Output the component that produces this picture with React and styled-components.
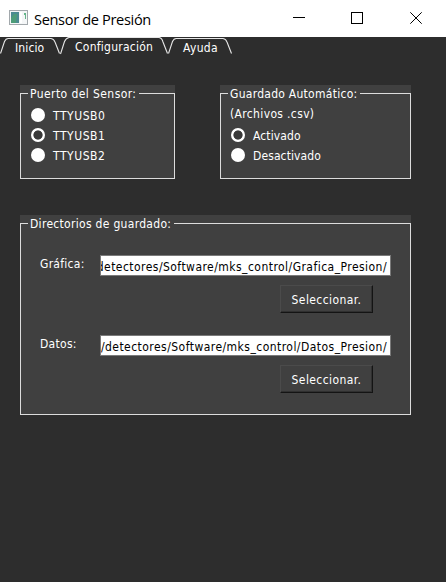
import React from 'react';
import styled, { createGlobalStyle } from 'styled-components';

const Global = createGlobalStyle`
  * { box-sizing: border-box; }
  body { margin: 0; background: #2d2d2d; overflow: hidden; }
`;

const Window = styled.div`
  width: 446px;
  height: 582px;
  display: flex;
  flex-direction: column;
  background: #2d2d2d;
  color: #fff;
  font: 12px/16px 'DejaVu Sans Condensed', 'DejaVu Sans', sans-serif;
  font-stretch: condensed;
  white-space: nowrap;
`;

const TitleBar = styled.header`
  height: 37px;
  flex: none;
  display: flex;
  align-items: flex-start;
  padding: 10px 24px 0 9px;
  background: #fff;
  color: #000;
  svg { display: block; flex: none; }
`;

const Title = styled.h1`
  flex: 1;
  margin: -1px 0 0 6px;
  font: 400 14.6px/20px 'Open Sans', 'Noto Sans', sans-serif;
  letter-spacing: ${(p) => p.$spacing}px;
`;

const WindowControls = styled.div`
  display: grid;
  grid-template-columns: 58px 59px 12px;
  padding-top: 2px;
`;

const Tabs = styled.nav`
  height: 18px;
  display: flex;
`;

const TabItem = styled.div`
  position: relative;
  width: ${(p) => p.$width}px;
  height: 18px;
  padding: ${(p) => (p.$active ? 2 : 3)}px 0 0 ${(p) => p.$inset}px;
  letter-spacing: ${(p) => p.$spacing || 0}px;
  svg { position: absolute; left: 0; top: 0; }
`;

const Page = styled.main`
  flex: 1;
  padding: 30px 35px 0 20px;
`;

const TopRow = styled.div`
  display: flex;
  gap: 45px;
  margin-bottom: 36px;
`;

const Group = styled.section`
  position: relative;
  width: ${(p) => p.$width}px;
  height: ${(p) => p.$height}px;
  padding-top: 8px;
  background: #404040;
`;

const Frame = styled.div`
  height: 100%;
  border: 1px solid #dcdcdc;
  padding: ${(p) => p.$pad};
`;

const Legend = styled.h2`
  position: absolute;
  left: 8px;
  top: 1px;
  width: ${(p) => p.$width}px;
  margin: 0;
  padding-left: 2px;
  font: inherit;
  background: #404040;
  letter-spacing: ${(p) => p.$spacing || 0}px;
`;

const Text = styled.span`
  padding-top: 1px;
  letter-spacing: ${(p) => p.$spacing || 0}px;
`;

const Option = styled.label`
  height: 20px;
  display: flex;
  align-items: flex-start;
  padding-top: 2px;
  gap: 8px;
`;

const Radio = styled.span`
  width: 14px;
  height: 14px;
  margin-top: 1px;
  border-radius: 50%;
  background: ${(p) => (p.$checked ? 'radial-gradient(circle, #383838 4.2px, #fff 5px)' : '#fff')};
`;

const Note = styled.div`
  height: 20px;
  margin-left: -1px;
  line-height: 18px;
  letter-spacing: ${(p) => p.$spacing || 0}px;
`;

const Directory = styled.div`
  height: 80px;
  display: grid;
  grid-template: 30px 28px / 60px 291px;
`;

const PathField = styled.div`
  height: 21px;
  display: flex;
  justify-content: flex-end;
  overflow: hidden;
  border: 1px solid #7a7a7a;
  padding: 3px 3px 0 0;
  background: #fff;
  color: #000;
`;

const PathText = styled.span`
  flex: none;
  letter-spacing: ${(p) => p.$spacing || 0}px;
`;

const Button = styled.button`
  grid-column: 2;
  width: 93px;
  height: 28px;
  margin-left: 180px;
  padding: 1px 0 0;
  border: 1px solid #4b4b4b;
  border-right-color: #141414;
  border-bottom-color: #141414;
  box-shadow: inset -1px -1px #303030;
  background: #404040;
  color: #fff;
  font: inherit;
  letter-spacing: 0.42px;
`;

const WindowIcon = () => (
  <svg width="19" height="16" viewBox="0 0 19 16">
    <rect x=".5" y=".5" width="18" height="14" fill="#f4f6f7" stroke="#a2a8ac" />
    <rect x="2" y="2" width="8" height="11" fill="#4b8b91" />
    <path d="M2 13V8l3-4h3l-1 9z" fill="#4d9c78" />
    <rect x="11" y="2" width="2" height="11" fill="#fff" />
    <path d="M15 3h2v6h-1V5h-1z" fill="#65b58a" />
  </svg>
);

const Tab = ({ label, width, inset, active, spacing }) => (
  <TabItem $width={width} $inset={inset} $active={active} $spacing={spacing}>
    <svg width={width + 4} height="18" fill="none" stroke="#e6e6e6" strokeWidth="1.1">
      <path
        d={`M.5 ${active ? 17 : 16.5}L4.5 4.5Q6 1 9 ${active ? 0.5 : 1.5}H${width - 9}Q${width - 6} ${active ? 1 : 2} ${width - 5} 5L${width - 0.5} 16.5`}
      />
    </svg>
    {label}
  </TabItem>
);

const RadioOption = ({ label, checked, spacing }) => (
  <Option>
    <Radio $checked={checked} />
    <Text $spacing={spacing}>{label}</Text>
  </Option>
);

const DirectoryRow = ({ label, path, labelSpacing, spacing }) => (
  <Directory>
    <Text $spacing={labelSpacing}>{label}</Text>
    <PathField><PathText $spacing={spacing}>{path}</PathText></PathField>
    <Button>Seleccionar.</Button>
  </Directory>
);

export default function App() {
  return (
    <Window>
      <Global />
      <TitleBar>
        <WindowIcon />
        <Title $spacing={-0.35}>Sensor de Presión</Title>
        <WindowControls>
          <svg width="12" height="12"><path d="M0 5.5h12" stroke="#000" /></svg>
          <svg width="12" height="12"><rect x=".5" y=".5" width="11" height="11" fill="none" stroke="#000" /></svg>
          <svg width="12" height="12"><path d="M.3.3l11.4 11.4M11.7.3L.3 11.7" stroke="#000" /></svg>
        </WindowControls>
      </TitleBar>
      <Tabs>
        <Tab label="Inicio" width={60} inset={15} spacing={0.12} />
        <Tab label="Configuración" width={108} inset={15} spacing={0.25} active />
        <Tab label="Ayuda" width={64} inset={15} spacing={0.35} />
      </Tabs>
      <Page>
        <TopRow>
          <Group $width={155} $height={94}>
            <Legend $width={111} $spacing={0.42}>Puerto del Sensor:</Legend>
            <Frame $pad="11px 0 0 10px">
              <RadioOption label="TTYUSB0" spacing={0.55} />
              <RadioOption label="TTYUSB1" spacing={0.55} checked />
              <RadioOption label="TTYUSB2" spacing={0.55} />
            </Frame>
          </Group>
          <Group $width={191} $height={94}>
            <Legend $width={132} $spacing={0.27}>Guardado Automático:</Legend>
            <Frame $pad="11px 0 0 10px">
              <Note $spacing={0.35}>(Archivos .csv)</Note>
              <RadioOption label="Activado" spacing={0.1} checked />
              <RadioOption label="Desactivado" spacing={0.1} />
            </Frame>
          </Group>
        </TopRow>
        <Group $width={391} $height={200}>
          <Legend $width={146} $spacing={0.3}>Directorios de guardado:</Legend>
          <Frame $pad="31px 0 0 19px">
            <DirectoryRow label="Gráfica:" labelSpacing={0.28} spacing={0.46} path="/detectores/Software/mks_control/Grafica_Presion/" />
            <DirectoryRow label="Datos:" labelSpacing={0.28} spacing={0.46} path="/detectores/Software/mks_control/Datos_Presion/" />
          </Frame>
        </Group>
      </Page>
    </Window>
  );
}
